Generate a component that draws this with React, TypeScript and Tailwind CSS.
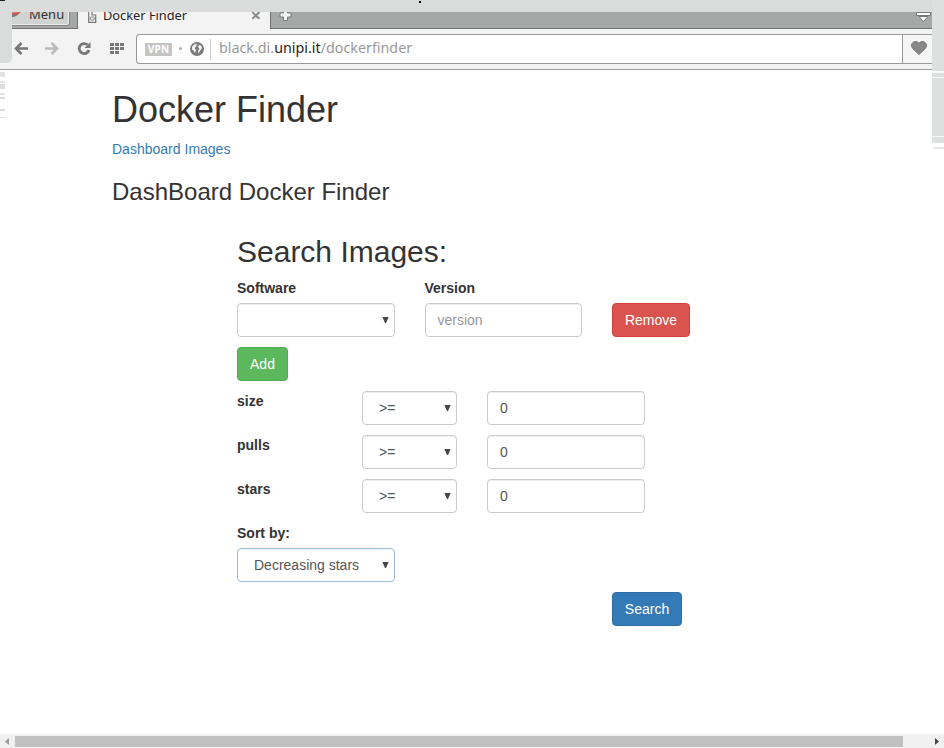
import React from "react";

const control =
  "h-[34px] rounded-[4px] border border-[#ccc] bg-white text-[14px] leading-5 text-[#555] flex items-center shadow-[inset_0_1px_1px_rgba(0,0,0,0.075)]";

function Arrow() {
  return (
    <svg width="7" height="6" viewBox="0 0 7 6" className="ml-auto shrink-0">
      <path d="M0.4 0H6.6L4 6H3Z" fill="#444" />
    </svg>
  );
}

function Filter({ name }: { name: string }) {
  return (
    <div className="mb-[10px] flex h-[34px]">
      <span className="w-[125px] font-bold leading-5">{name}</span>
      <div className={`${control} w-[95px] pl-4 pr-[5px]`}>
        <span>&gt;=</span>
        <Arrow />
      </div>
      <div className={`${control} ml-[30px] w-[158px] pl-3`}>0</div>
    </div>
  );
}

function TabStrip() {
  return (
    <div className="flex h-[17px]">
      <div className="flex h-[17px] w-[78px] shrink-0 border-b border-r border-[#6f7170] bg-[#a5a8a7] pl-3">
        <div className="relative h-[14px] w-[58px] rounded-br-[3px] border-b border-r border-[#858786] bg-[#d1d3d2] shadow-[inset_-1px_-1px_0_#eee]">
          <svg width="10" height="6" className="absolute left-0 top-0">
            <path d="M0 0.5L9 0L5 3.5L0 5Z" fill="#d95346" />
            <path d="M0 3L6 2L3 4.5L0 5.2Z" fill="#687c93" />
          </svg>
          <span className="absolute left-[17px] top-[-8px] text-[13px] leading-5 text-[#333]">Menu</span>
        </div>
      </div>
      <div className="relative h-[17px] w-[192px] shrink-0 bg-[#f3f3f3]">
        <svg width="10" height="11" viewBox="0 0 10 11" className="absolute left-[10px] top-0">
          <path d="M0.7 0V10.3H7.7V3H4V0" fill="#f8f8f8" stroke="#777" strokeWidth="1.2" />
          <rect x="2.2" y="5" width="4" height="3" rx="1" fill="none" stroke="#777" />
        </svg>
        <span className="absolute left-[25px] top-[-7px] whitespace-nowrap text-[12.8px] leading-5 text-[#222]">Docker Finder</span>
        <svg width="8" height="7" viewBox="0 0 8 7" className="absolute left-[174px] top-0">
          <path d="M0 0L7.5 7M7.5 0L0 7" stroke="#888" strokeWidth="2" />
        </svg>
      </div>
      <div className="flex h-[17px] flex-1 justify-between border-b border-l border-[#6f7170] bg-[#a5a8a7] pl-2 pr-[13px]">
        <svg width="14" height="10" viewBox="0 0 14 10">
          <path d="M4.5 -1V1H1V5H4.5V8.5H8.5V5H12V1H8.5V-1" fill="#f4f4f4" stroke="#777" />
        </svg>
        <svg width="15" height="11" viewBox="0 0 15 11">
          <path d="M0.5 0.5H14.5V3.5H0.5Z" fill="#fff" stroke="#777" />
          <path d="M3 4.5H12L7.5 9.5Z" fill="#fff" stroke="#777" />
        </svg>
      </div>
    </div>
  );
}

function Toolbar() {
  return (
    <div className="flex h-[41px] border-b border-[#999] bg-[#f3f3f3] pt-[5px]">
      <div className="flex w-[136px] shrink-0 pt-[7px]">
        <svg width="136" height="15" viewBox="0 0 136 15">
          <path d="M28 7.5H17M21.5 2L16 7.5L21.5 13" fill="none" stroke="#777" strokeWidth="2.6" />
          <path d="M45 7.5H56M51.5 2L57 7.5L51.5 13" fill="none" stroke="#bbb" strokeWidth="2.6" />
          <path d="M87.5 3.8A5 5 0 1 0 89 9" fill="none" stroke="#777" strokeWidth="2.8" />
          <path d="M90.5 1V7H84.5Z" fill="#777" />
          <path d="M110 2h4v3h-4zM115 2h4v3h-4zM120 2h4v3h-4zM110 6h4v3h-4zM115 6h4v3h-4zM120 6h4v3h-4zM110 10h4v3h-4zM115 10h4v3h-4z" fill="#777" />
        </svg>
      </div>
      <div className="flex h-[30px] flex-1 items-center rounded-l-[4px] border border-r-0 border-[#999] bg-white">
        <span className="ml-2 flex h-[13px] w-[27px] shrink-0 items-center justify-center bg-[#c5c5c5] text-[10px] font-bold leading-none tracking-[0.3px] text-white">VPN</span>
        <span className="mb-[2px] ml-[7px] size-[3px] rounded-full bg-[#aaa]" />
        <svg width="14" height="14" viewBox="0 0 14 14" className="mb-px ml-2">
          <circle cx="7" cy="7" r="7" fill="#7b7b7b" />
          <path d="M2 5L4 2.5L7 2L6 4.5L4.5 6L6 8L5 11L3.5 8.5L2 7.5ZM8 5L9 3L11 3.5L12 6L10.5 8L8.5 11.5L8 9L9.5 6.5Z" fill="#f5f5f5" />
        </svg>
        <span className="ml-[6px] h-[21px] w-px bg-[#ccc]" />
        <span className="mb-[2px] ml-2 whitespace-nowrap text-[14.3px] leading-5 text-[#999]">
          black.di.<span className="text-[#222]">unipi.it</span>/dockerfinder
        </span>
        <div className="ml-auto flex h-full w-[42px] items-center border-l border-[#999] bg-[#f5f5f5] pl-2">
          <svg width="16" height="14" viewBox="0 0 16 14" className="mb-[2px]">
            <path d="M8 13.5L1.5 7.3C-2 2.5 4.5-2 8 2.3C11.5-2 18 2.5 14.5 7.3Z" fill="#888" stroke="#707070" />
          </svg>
        </div>
      </div>
    </div>
  );
}

export default function App() {
  return (
    <div className="relative flex h-[748px] w-[944px] flex-col overflow-hidden bg-white font-['Liberation_Sans',Arial,sans-serif] text-[14px] leading-5 text-[#333]">
      <header className="h-[70px] shrink-0 bg-[#dadcdb] pt-3 font-['Noto_Sans',sans-serif]">
        <TabStrip />
        <Toolbar />
      </header>

      <main className="flex-1 pl-[112px] pt-5">
        <h1 className="h-10 text-[36px] leading-10">Docker Finder</h1>
        <nav className="mt-[9px] flex h-5 gap-1 text-[#337ab7]">
          <a>Dashboard</a>
          <a>Images</a>
        </nav>
        <h3 className="mt-5 h-[26px] text-[24px] leading-[26px]">DashBoard Docker Finder</h3>
        <section className="ml-[125px] mt-[30px]">
          <h2 className="h-[33px] text-[30px] leading-[33px]">Search Images:</h2>
          <div className="mt-[10px] flex h-[25px] font-bold">
            <label className="w-[187.5px]">Software</label>
            <label>Version</label>
          </div>
          <div className="flex">
            <div className={`${control} w-[158px] pr-[5px]`}>
              <Arrow />
            </div>
            <div className={`${control} ml-[30px] w-[157px] pl-[11.5px]`}>
              <span className="text-[#999]">version</span>
            </div>
            <button className="ml-[30px] h-[34px] w-[78px] rounded-[4px] border border-[#d43f3a] bg-[#d9534f] text-white">Remove</button>
          </div>
          <button className="my-[10px] block h-[34px] w-[51px] rounded-[4px] border border-[#4cae4c] bg-[#5cb85c] text-white">Add</button>
          <Filter name="size" />
          <Filter name="pulls" />
          <Filter name="stars" />
          <label className="block h-[25px] font-bold">Sort by:</label>
          <div className="flex h-[34px] w-[158px] items-center rounded-[4px] border border-[#9bbcdb] bg-white pl-4 pr-[5px] text-[#555] shadow-[inset_0_1px_1px_rgba(0,0,0,0.05)]">
            <span>Decreasing stars</span>
            <Arrow />
          </div>
          <button className="ml-[375px] mt-[10px] block h-[34px] w-[70px] rounded-[4px] border border-[#2e6da4] bg-[#337ab7] text-white">Search</button>
        </section>
      </main>

      <footer className="flex h-[14px] shrink-0 items-center bg-[#f0f0f0]">
        <svg width="15" height="11" viewBox="0 0 15 11">
          <path d="M5 5.5L9 2V9Z" fill="#999" />
        </svg>
        <div className="mt-px h-[11px] w-[888px] bg-[#c1c1c1]" />
        <svg width="41" height="11" viewBox="0 0 41 11">
          <path d="M36 5.5L32 2V9Z" fill="#444" />
        </svg>
      </footer>

      <div className="absolute left-0 top-0 h-3 w-full bg-[#dadcdb]" />
      <div className="absolute left-0 top-0 h-[63px] w-3 rounded-br-[5px] bg-[#dadcdb]" />
      <div className="absolute left-0 top-0 h-px w-[5px] bg-[#222]" />
      <div className="absolute left-[419px] top-[1px] size-[2px] bg-black" />
      <div className="absolute left-0 top-[70px] w-[5px]">
        <div className="mt-[2px] h-[5px] bg-[#e2e2e2]" />
        <div className="mt-1 h-[2px] bg-[#e4e4e4]" />
        <div className="mt-[1px] h-[5px] bg-[#dedede]" />
        <div className="mt-1 h-[2px] bg-[#e4e4e4]" />
        <div className="mt-[2px] h-[2px] bg-[#ddd]" />
        <div className="mt-[10px] h-[2px] bg-[#ddd]" />
        <div className="mt-[6px] h-px bg-[#e0e0e0]" />
      </div>
      <div className="absolute right-0 top-0 flex h-[143px] w-3 flex-col bg-[#dde0df]">
        <div className="mt-[71px] h-[2px] bg-[#f8f8f8]" />
        <div className="mt-1 h-px bg-[#f8f8f8]" />
        <div className="mt-[58px] h-px bg-[#f8f8f8]" />
      </div>
      <div className="absolute right-0 top-[147px] h-[2px] w-[11px] bg-[#e7e7e7]" />
    </div>
  );
}
